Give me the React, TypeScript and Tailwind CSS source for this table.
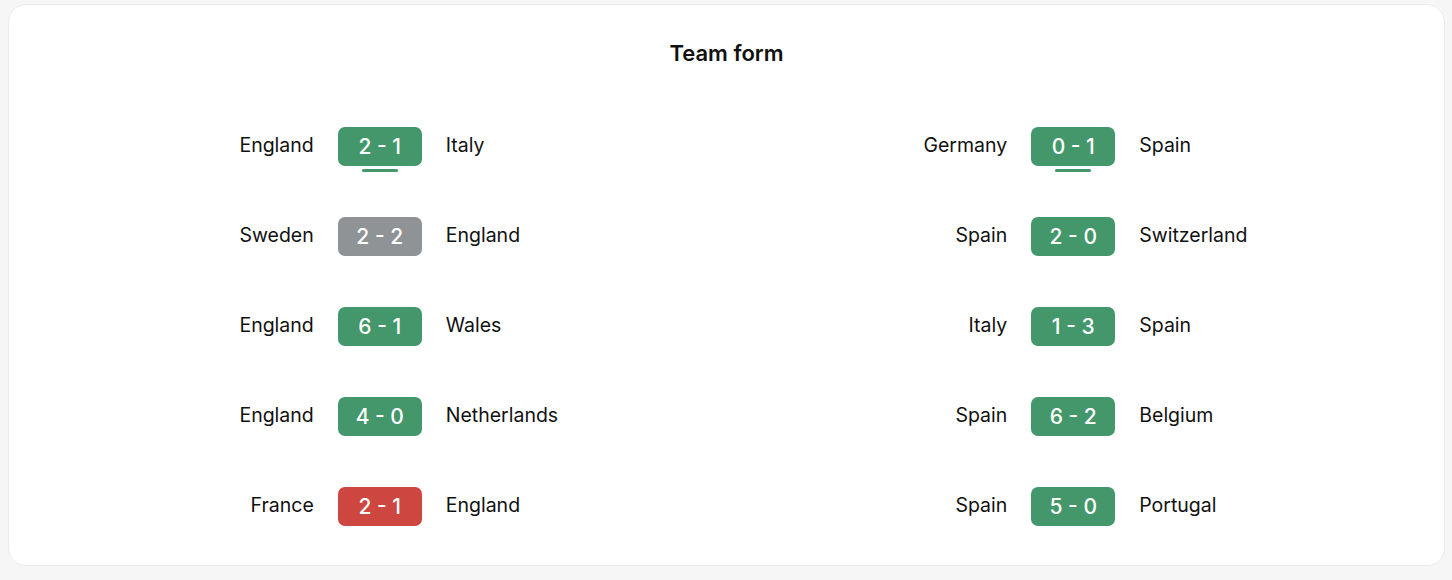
import React from "react";

type Match = { home: string; score: string; away: string; result: "win" | "draw" | "loss"; latest?: boolean };

const left: Match[] = [
  { home: "England", score: "2 - 1", away: "Italy", result: "win", latest: true },
  { home: "Sweden", score: "2 - 2", away: "England", result: "draw" },
  { home: "England", score: "6 - 1", away: "Wales", result: "win" },
  { home: "England", score: "4 - 0", away: "Netherlands", result: "win" },
  { home: "France", score: "2 - 1", away: "England", result: "loss" },
];

const right: Match[] = [
  { home: "Germany", score: "0 - 1", away: "Spain", result: "win", latest: true },
  { home: "Spain", score: "2 - 0", away: "Switzerland", result: "win" },
  { home: "Italy", score: "1 - 3", away: "Spain", result: "win" },
  { home: "Spain", score: "6 - 2", away: "Belgium", result: "win" },
  { home: "Spain", score: "5 - 0", away: "Portugal", result: "win" },
];

function Row({ m }: { m: Match }) {
  const bg =
    m.result === "win" ? "bg-[#43976a]" : m.result === "draw" ? "bg-[#8f9396]" : "bg-[#cd4640]";
  return (
    <div className="flex h-[39px] items-center gap-6">
      <div className="flex-1 pb-[2px] text-right text-[19.5px] text-[#111]">{m.home}</div>
      <div className="relative">
        <div
          className={`${bg} flex h-[39px] w-[84px] items-center justify-center rounded-[7px] text-[21px] font-medium text-white`}
        >
          {m.score}
        </div>
        {m.latest && (
          <div className="absolute left-1/2 top-[42px] h-[3px] w-[36px] -translate-x-1/2 rounded-full bg-[#43976a]" />
        )}
      </div>
      <div className="flex-1 pb-[2px] text-left text-[19.5px] text-[#111]">{m.away}</div>
    </div>
  );
}

export default function App() {
  return (
    <div
      className="min-h-[580px] bg-[#f6f6f6] pl-[8px] pr-[7px] pt-1"
      style={{ fontFamily: "Inter, 'Noto Sans', sans-serif" }}
    >
      <div className="rounded-[18px] border border-[#ebebeb] bg-white px-6 pb-[39px] pt-[34px]">
        <h2 className="text-center text-[22px] leading-7 font-semibold text-[#111]">Team form</h2>
        <div className="mt-[60px] grid grid-cols-2">
          <div className="flex flex-col gap-[51px]">
            {left.map((m, i) => (
              <Row key={i} m={m} />
            ))}
          </div>
          <div className="flex flex-col gap-[51px]">
            {right.map((m, i) => (
              <Row key={i} m={m} />
            ))}
          </div>
        </div>
      </div>
    </div>
  );
}
